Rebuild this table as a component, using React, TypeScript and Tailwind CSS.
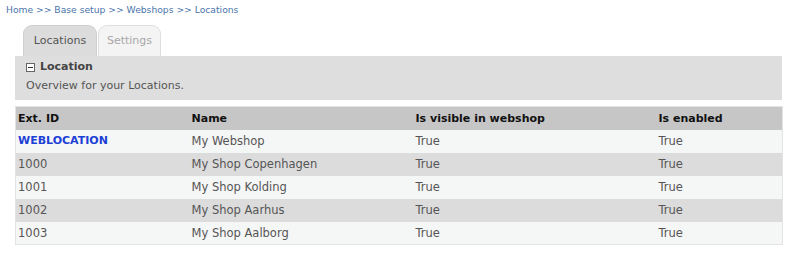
import React from 'react';

type Location = {
    extId: string;
    name: string;
    visible: string;
    enabled: string;
};

const locations: Location[] = [
    { extId: 'WEBLOCATION', name: 'My Webshop', visible: 'True', enabled: 'True' },
    { extId: '1000', name: 'My Shop Copenhagen', visible: 'True', enabled: 'True' },
    { extId: '1001', name: 'My Shop Kolding', visible: 'True', enabled: 'True' },
    { extId: '1002', name: 'My Shop Aarhus', visible: 'True', enabled: 'True' },
    { extId: '1003', name: 'My Shop Aalborg', visible: 'True', enabled: 'True' },
];

const App: React.FC = () => {
    return (
        <div className="w-[799px] h-[258px] bg-white font-['DejaVu_Sans',Verdana,sans-serif] text-[#444]">
            {/* Breadcrumb */}
            <div className="pl-[6px] pt-[3px] h-[20px] text-[9.2px] leading-[14px] text-[#4a74aa]">
                Home &gt;&gt; Base setup &gt;&gt; Webshops &gt;&gt; Locations
            </div>

            <div className="ml-[15px] w-[767px]">
                {/* Tabs */}
                <div className="flex items-end h-[36px] pl-[8px] pt-[5px]">
                    <div className="w-[74px] h-[31px] flex items-center justify-center rounded-t-[9px] border border-b-0 border-[#cfcfcf] bg-[#dcdcdc] text-[11px] text-[#555]">
                        Locations
                    </div>
                    <div className="ml-[1px] w-[63px] h-[31px] flex items-center justify-center rounded-t-[9px] border border-b-0 border-[#dedede] bg-[#f4f4f4] text-[11px] text-[#a8a8a8]">
                        Settings
                    </div>
                </div>

                {/* Panel */}
                <div className="h-[44px] bg-[#dedede] pl-[11px] pt-[3px]">
                    <div className="flex items-center gap-[5px] h-[16px] text-[11px] font-bold text-[#444]">
                        <span className="w-[9px] h-[9px] border border-[#666] bg-white flex items-center justify-center">
                            <span className="w-[5px] h-px bg-[#333]" />
                        </span>
                        Location
                    </div>
                    <div className="mt-[3px] text-[11px] leading-[16px] text-[#555]">Overview for your Locations.</div>
                </div>

                {/* Table */}
                <table className="mt-[6px] w-[767px] border border-[#e4e4e4] border-collapse text-[11.5px] table-fixed">
                    <colgroup>
                        <col className="w-[176px]" />
                        <col className="w-[224px]" />
                        <col className="w-[243px]" />
                        <col className="w-[124px]" />
                    </colgroup>
                    <thead>
                        <tr className="h-[23px] bg-[#c6c6c6] text-left text-[#111] text-[11px]">
                            <th className="pl-[2px] pt-px font-bold">Ext. ID</th>
                            <th className="pt-px font-bold">Name</th>
                            <th className="pt-px font-bold">Is visible in webshop</th>
                            <th className="pt-px font-bold">Is enabled</th>
                        </tr>
                    </thead>
                    <tbody>
                        {locations.map((loc, i) => (
                            <tr key={loc.extId} className={`h-[23px] ${i % 2 === 0 ? 'bg-[#f5f6f6]' : 'bg-[#dcdcdc]'} text-[#555]`}>
                                <td className={`pl-[2px] pt-px ${loc.extId === 'WEBLOCATION' ? 'font-bold text-[#1c3fd6] text-[11px]' : ''}`}>{loc.extId}</td>
                                <td className="pt-px">{loc.name}</td>
                                <td className="pt-px">{loc.visible}</td>
                                <td className="pt-px">{loc.enabled}</td>
                            </tr>
                        ))}
                    </tbody>
                </table>
            </div>
        </div>
    );
};

export default App;
